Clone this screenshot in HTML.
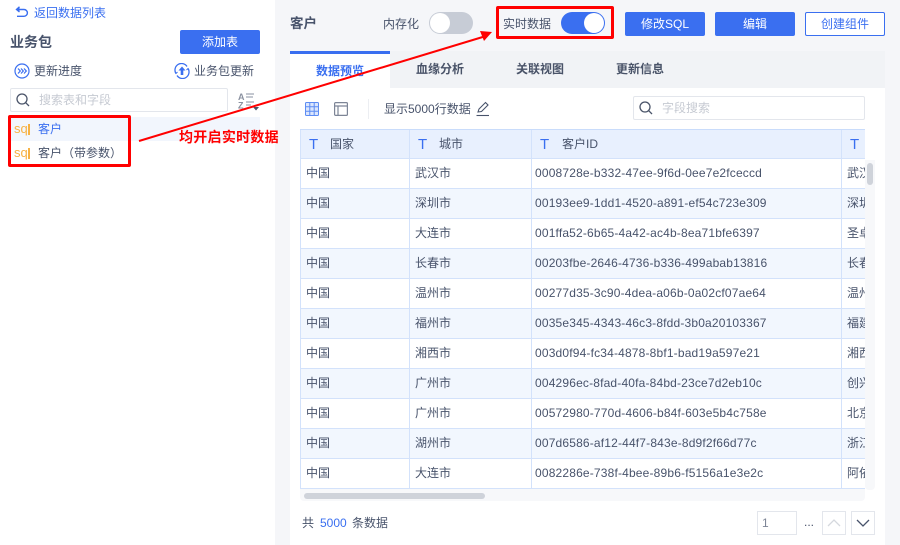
<!DOCTYPE html>
<html><head><meta charset="utf-8">
<style>
*{box-sizing:border-box}
html,body{margin:0;padding:0}
body{width:900px;height:545px;overflow:hidden;position:relative;background:#f5f6f9;font-family:"Liberation Sans","Noto Sans CJK SC",sans-serif;font-size:12px;color:#48536b}
.a{position:absolute;white-space:nowrap}
.btn{position:absolute;border-radius:2px;background:#3a6ff0;color:#fff;text-align:center;height:24px;line-height:24px;font-size:12px}
.tab{position:absolute;top:51px;height:37px;line-height:36px;text-align:center;font-weight:bold;color:#4a5469;font-size:12px}
#tbl{position:absolute;left:300px;top:129px;width:565px;height:360px;overflow:hidden;background:#fff;border-top:1px solid #c9dcfb}
.r{position:absolute;left:0;width:565px;height:30px;border-bottom:1px solid #d3e2fb;line-height:29px;font-size:12px;color:#48536b}
.r.o{background:#f2f7fe}
.r.h{top:0;height:29px;background:#e8f0fe;line-height:28px;border-bottom:1px solid #d3e2fb}
.r span{position:absolute;top:0;white-space:nowrap}
.c1{left:6px}.c2{left:115px}.c3{left:235px;letter-spacing:.17px}.c4{left:547px}
.r.h b{position:absolute;top:1px;color:#3a6ff0;font-size:15px;font-weight:normal}
.v{position:absolute;top:0;width:1px;height:360px;background:#d3e2fb}
.sq{position:absolute;left:14px;font-size:13px;line-height:14px;color:#f7b244}
.bar{position:absolute;left:28px;width:2px;height:11px;background:#f7b244}
</style></head>
<body>
<!-- left panel -->
<div class="a" style="left:0;top:0;width:275px;height:545px;background:#fff"></div>
<svg class="a" style="left:15px;top:6px" width="14" height="13" viewBox="0 0 14 13" fill="none" stroke="#3a6ff0" stroke-width="1.4"><path d="M1.5 3.5H9a3.4 3.4 0 0 1 0 6.8H2"/><path d="M4.5 .8L1.5 3.5 4.5 6" fill="#3a6ff0"/></svg>
<div class="a" style="left:34px;top:5px;color:#3a6ff0;line-height:16px">返回数据列表</div>
<div class="a" style="left:10px;top:33px;font-size:14px;font-weight:bold;line-height:18px;color:#48536b">业务包</div>
<div class="btn" style="left:180px;top:30px;width:80px">添加表</div>
<svg class="a" style="left:14px;top:63px" width="16" height="16" viewBox="0 0 16 16" fill="none" stroke="#3a6ff0"><circle cx="8" cy="8" r="7" stroke-width="1.2"/><path d="M4 5.5L6.3 8 4 10.5M7 5.5L9.3 8 7 10.5M10 5.5L12.3 8 10 10.5" stroke-width="1.2"/></svg>
<div class="a" style="left:34px;top:63px;line-height:16px">更新进度</div>
<svg class="a" style="left:174px;top:63px" width="16" height="16" viewBox="0 0 16 16" fill="none" stroke="#3a6ff0" stroke-width="1.3"><path d="M2 10.5A6.5 6.5 0 0 1 13 3.5M14 5.5A6.5 6.5 0 0 1 3 12.5"/><path d="M8 3.5L11.5 7.5H9.3V12H6.7V7.5H4.5Z" fill="#3a6ff0" stroke="none"/><path d="M.8 8.5L2 10.5 3.5 9M15.2 7.5L14 5.5 12.5 7" stroke-width="1"/></svg>
<div class="a" style="left:194px;top:63px;line-height:16px">业务包更新</div>
<div class="a" style="left:10px;top:88px;width:218px;height:24px;border:1px solid #e3e6ec;border-radius:2px;background:#fff"></div>
<svg class="a" style="left:16px;top:93px" width="14" height="14" viewBox="0 0 14 14" fill="none" stroke="#4a5469" stroke-width="1.3"><circle cx="6" cy="6" r="5"/><path d="M9.6 9.6L13 13"/></svg>
<div class="a" style="left:39px;top:92px;line-height:16px;color:#c6cad2">搜索表和字段</div>
<svg class="a" style="left:238px;top:92px" width="22" height="19" viewBox="0 0 22 19" fill="none" stroke="#8a91a0"><text x="0" y="8" font-size="9" font-weight="bold" fill="#8a91a0" stroke="none" font-family="Liberation Sans">A</text><text x="0" y="16.5" font-size="9" font-weight="bold" fill="#8a91a0" stroke="none" font-family="Liberation Sans">Z</text><path d="M8 2H16M8 5H15M8 10H16M8 13H13"/><path d="M15 15H21L18 18.5Z" fill="#4a5469" stroke="none"/></svg>
<div class="a" style="left:10px;top:117px;width:250px;height:24px;background:#f2f6fd"></div>
<div class="sq" style="top:122px">sq</div><div class="bar" style="top:124px"></div>
<div class="a" style="left:38px;top:121px;line-height:16px;color:#3a6ff0">客户</div>
<div class="sq" style="top:146px">sq</div><div class="bar" style="top:148px"></div>
<div class="a" style="left:38px;top:145px;line-height:16px">客户（带参数）</div>
<!-- header right -->
<div class="a" style="left:290px;top:15px;font-size:13.5px;font-weight:bold;line-height:18px;color:#48536b">客户</div>
<div class="a" style="left:383px;top:16px;line-height:16px">内存化</div>
<div class="a" style="left:429px;top:12px;width:44px;height:22px;border-radius:11px;background:#c7ccd6"></div>
<div class="a" style="left:430px;top:13px;width:20px;height:20px;border-radius:50%;background:#fff"></div>
<div class="a" style="left:503px;top:16px;line-height:16px">实时数据</div>
<div class="a" style="left:561px;top:12px;width:44px;height:22px;border-radius:11px;background:#3a6ff0"></div>
<div class="a" style="left:584px;top:13px;width:20px;height:20px;border-radius:50%;background:#fff"></div>
<div class="btn" style="left:625px;top:12px;width:80px">修改SQL</div>
<div class="btn" style="left:715px;top:12px;width:80px">编辑</div>
<div class="btn" style="left:805px;top:12px;width:80px;background:#fff;border:1px solid #3a6ff0;color:#3a6ff0;line-height:22px">创建组件</div>
<!-- main panel -->
<div class="a" style="left:290px;top:88px;width:595px;height:457px;background:#fff"></div>
<div class="a" style="left:290px;top:51px;width:595px;height:37px;background:#f1f3f6"></div>
<div class="tab" style="left:290px;width:100px;background:#fff;border-top:3px solid #3a6ff0;color:#3a6ff0;line-height:34px">数据预览</div>
<div class="tab" style="left:390px;width:100px">血缘分析</div>
<div class="tab" style="left:490px;width:100px">关联视图</div>
<div class="tab" style="left:590px;width:100px">更新信息</div>
<!-- toolbar -->
<svg class="a" style="left:305px;top:102px" width="14" height="14" viewBox="0 0 14 14" fill="#dbe6fd" stroke="#5c8cf3" stroke-width="1"><rect x=".5" y=".5" width="13" height="13" rx="1"/><path d="M.5 4.8H13.5M.5 9.2H13.5M4.8 .5V13.5M9.2 .5V13.5"/></svg>
<svg class="a" style="left:334px;top:102px" width="14" height="14" viewBox="0 0 14 14" fill="none" stroke="#7d8596" stroke-width="1.2"><rect x=".6" y=".6" width="12.8" height="12.8" rx="1"/><path d="M.6 4H13.4M4 4V13.4"/></svg>
<div class="a" style="left:368px;top:99px;width:1px;height:20px;background:#eceef2"></div>
<div class="a" style="left:384px;top:101px;line-height:16px">显示5000行数据</div>
<svg class="a" style="left:476px;top:101px" width="14" height="16" viewBox="0 0 14 16" fill="none" stroke="#48536b" stroke-width="1.1"><path d="M2 11L3 8 9.5 1.5 12 4 5.5 10.5Z"/><path d="M.5 14.5H13"/></svg>
<div class="a" style="left:633px;top:96px;width:232px;height:24px;border:1px solid #e3e6ec;border-radius:2px"></div>
<svg class="a" style="left:639px;top:101px" width="14" height="14" viewBox="0 0 14 14" fill="none" stroke="#4a5469" stroke-width="1.3"><circle cx="6" cy="6" r="5"/><path d="M9.6 9.6L13 13"/></svg>
<div class="a" style="left:662px;top:100px;line-height:16px;color:#c6cad2">字段搜索</div>
<!-- table -->
<div id="tbl">
<div class="r h"><b style="left:9px">T</b><span style="left:30px">国家</span><b style="left:118px">T</b><span style="left:139px">城市</span><b style="left:240px">T</b><span style="left:262px">客户ID</span><b style="left:550px">T</b></div>
<div class="r" style="top:29px"><span class="c1">中国</span><span class="c2">武汉市</span><span class="c3">0008728e-b332-47ee-9f6d-0ee7e2fceccd</span><span class="c4">武汉市</span></div>
<div class="r o" style="top:59px"><span class="c1">中国</span><span class="c2">深圳市</span><span class="c3">00193ee9-1dd1-4520-a891-ef54c723e309</span><span class="c4">深圳市</span></div>
<div class="r" style="top:89px"><span class="c1">中国</span><span class="c2">大连市</span><span class="c3">001ffa52-6b65-4a42-ac4b-8ea71bfe6397</span><span class="c4">圣卓</span></div>
<div class="r o" style="top:119px"><span class="c1">中国</span><span class="c2">长春市</span><span class="c3">00203fbe-2646-4736-b336-499abab13816</span><span class="c4">长春市</span></div>
<div class="r" style="top:149px"><span class="c1">中国</span><span class="c2">温州市</span><span class="c3">00277d35-3c90-4dea-a06b-0a02cf07ae64</span><span class="c4">温州市</span></div>
<div class="r o" style="top:179px"><span class="c1">中国</span><span class="c2">福州市</span><span class="c3">0035e345-4343-46c3-8fdd-3b0a20103367</span><span class="c4">福建</span></div>
<div class="r" style="top:209px"><span class="c1">中国</span><span class="c2">湘西市</span><span class="c3">003d0f94-fc34-4878-8bf1-bad19a597e21</span><span class="c4">湘西</span></div>
<div class="r o" style="top:239px"><span class="c1">中国</span><span class="c2">广州市</span><span class="c3">004296ec-8fad-40fa-84bd-23ce7d2eb10c</span><span class="c4">创兴</span></div>
<div class="r" style="top:269px"><span class="c1">中国</span><span class="c2">广州市</span><span class="c3">00572980-770d-4606-b84f-603e5b4c758e</span><span class="c4">北京</span></div>
<div class="r o" style="top:299px"><span class="c1">中国</span><span class="c2">湖州市</span><span class="c3">007d6586-af12-44f7-843e-8d9f2f66d77c</span><span class="c4">浙江</span></div>
<div class="r" style="top:329px"><span class="c1">中国</span><span class="c2">大连市</span><span class="c3">0082286e-738f-4bee-89b6-f5156a1e3e2c</span><span class="c4">阿依</span></div>
<div class="v" style="left:0"></div><div class="v" style="left:109px"></div><div class="v" style="left:231px"></div><div class="v" style="left:541px"></div>
</div>
<!-- scrollbars -->
<div class="a" style="left:865px;top:160px;width:10px;height:330px;background:#f7f8fa;border-radius:0 0 4px 4px"></div>
<div class="a" style="left:867px;top:163px;width:6px;height:22px;background:#cfd3da;border-radius:3px"></div>
<div class="a" style="left:300px;top:489px;width:565px;height:12px;background:#f7f8fa;border-radius:0 0 4px 4px"></div>
<div class="a" style="left:304px;top:493px;width:181px;height:6px;background:#cfd3da;border-radius:3px"></div>
<!-- footer -->
<div class="a" style="left:302px;top:515px;line-height:16px">共</div>
<div class="a" style="left:320px;top:515px;line-height:16px;color:#3a6ff0">5000</div>
<div class="a" style="left:352px;top:515px;line-height:16px">条数据</div>
<div class="a" style="left:757px;top:511px;width:40px;height:24px;border:1px solid #e3e6ec;line-height:22px;padding-left:4px;color:#7d8596">1</div>
<div class="a" style="left:804px;top:514px;line-height:16px">...</div>
<div class="a" style="left:822px;top:511px;width:24px;height:24px;border:1px solid #e3e6ec"></div>
<svg class="a" style="left:822px;top:511px" width="24" height="24" fill="none" stroke="#d5d8de" stroke-width="1.3"><path d="M6 15L12 9 18 15"/></svg>
<div class="a" style="left:851px;top:511px;width:24px;height:24px;border:1px solid #e3e6ec"></div>
<svg class="a" style="left:851px;top:511px" width="24" height="24" fill="none" stroke="#48536b" stroke-width="1.3"><path d="M6 9L12 15 18 9"/></svg>
<!-- annotations -->
<div class="a" style="left:8px;top:115px;width:123px;height:52px;border:3px solid #f00;border-radius:2px"></div>
<div class="a" style="left:496px;top:6px;width:118px;height:33px;border:3px solid #f00;border-radius:2px"></div>
<div class="a" style="left:179px;top:129px;font-size:14px;letter-spacing:.28px;font-weight:bold;color:#f00;line-height:16px">均开启实时数据</div>
<svg class="a" style="left:0;top:0" width="900" height="545" fill="none"><path d="M139 141L486 36" stroke="#f00" stroke-width="2"/><path d="M492 32L480 31 484 41Z" fill="#f00"/></svg>
</body></html>
